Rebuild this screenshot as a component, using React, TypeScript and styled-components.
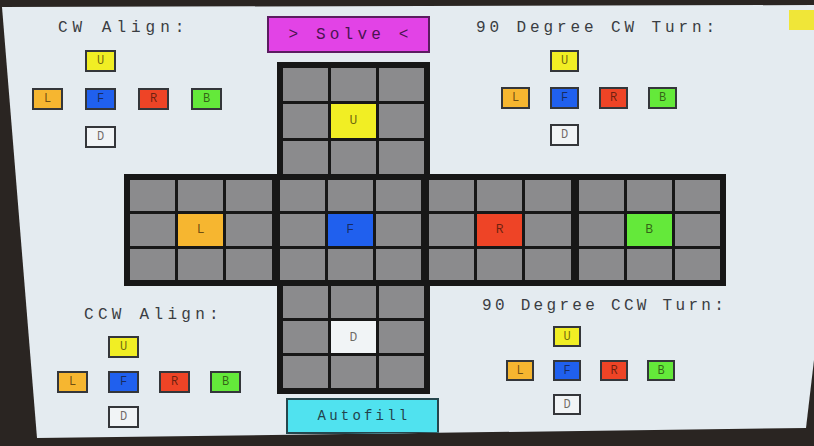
import React from 'react';
import styled, { createGlobalStyle } from 'styled-components';

type Face = 'U' | 'L' | 'F' | 'R' | 'B' | 'D';

// sticker colours for each face centre
const faceColors: Record<Face, string> = {
  U: '#f1ee24',
  L: '#f6b630',
  F: '#2060ee',
  R: '#ee4426',
  B: '#64e93a',
  D: '#f1f4f6',
};

const GlobalStyle = createGlobalStyle`
  html, body {
    margin: 0;
    padding: 0;
  }
  body {
    width: 814px;
    height: 446px;
    overflow: hidden;
    background: #2a2522;
    font-family: 'Liberation Mono', 'DejaVu Sans Mono', monospace;
  }
`;

const Screen = styled.div`
  width: 814px;
  height: 446px;
  background: #e4ebf0;
  clip-path: polygon(2px 7px, 814px 5px, 814px 360px, 806px 428px, 37px 438px);
  display: grid;
  grid-template-columns: 277px 153px 1fr;
  grid-template-rows: 174px 112px 1fr;
`;

/* ---------- side panels ---------- */

const Panel = styled.div<{ $top: number; $left: number }>`
  padding: ${(p) => p.$top}px 0 0 ${(p) => p.$left}px;
  display: flex;
  flex-direction: column;
  align-items: flex-start;
`;

const PanelHeader = styled.div`
  display: flex;
  align-items: flex-start;
  align-self: stretch;
`;

const Title = styled.div<{ $indent: number; $below: number; $spacing: number }>`
  margin-left: ${(p) => p.$indent}px;
  margin-bottom: ${(p) => p.$below}px;
  font-size: 16px;
  line-height: 16px;
  letter-spacing: ${(p) => p.$spacing}px;
  color: #3a3d42;
  white-space: nowrap;
`;

const StatusLight = styled.div`
  margin: -10px 0 0 auto;
  width: 25px;
  height: 20px;
  background: #f0e638;
`;

const KeyPad = styled.div<{ $w: number; $h: number; $colGap: number; $rowGap: number }>`
  display: grid;
  grid-template-columns: repeat(4, ${(p) => p.$w}px);
  grid-auto-rows: ${(p) => p.$h}px;
  column-gap: ${(p) => p.$colGap}px;
  row-gap: ${(p) => p.$rowGap}px;
`;

const Key = styled.button<{ $face: Face }>`
  grid-column: ${(p) => (p.$face === 'U' || p.$face === 'D' ? '2' : 'auto')};
  margin: 0;
  padding: 0;
  border: 2px solid #34363a;
  background: ${(p) => faceColors[p.$face]};
  color: rgba(20, 10, 0, 0.6);
  font-family: 'Liberation Mono', monospace;
  font-size: 12px;
  line-height: 1;
  display: flex;
  align-items: center;
  justify-content: center;
`;

const KeySpacer = styled.div``;

type PadSize = { w: number; h: number; colGap: number; rowGap: number };

const MovePad: React.FC<PadSize> = ({ w, h, colGap, rowGap }) => (
  <KeyPad $w={w} $h={h} $colGap={colGap} $rowGap={rowGap}>
    <Key $face="U">U</Key>
    <KeySpacer />
    <KeySpacer />
    <Key $face="L">L</Key>
    <Key $face="F">F</Key>
    <Key $face="R">R</Key>
    <Key $face="B">B</Key>
    <Key $face="D">D</Key>
  </KeyPad>
);

/* ---------- cube net ---------- */

const CenterColumn = styled.div`
  display: flex;
  flex-direction: column;
`;

const SolveButton = styled.button`
  margin: 16px 0 9px -10px;
  width: 163px;
  height: 37px;
  padding: 0 0 0 4px;
  border: 2px solid #5b1c60;
  background: #e243e6;
  color: #4a1450;
  font-family: 'Liberation Mono', monospace;
  font-size: 16px;
  letter-spacing: 4.2px;
`;

const AutofillButton = styled.button`
  margin: 4px 0 0 9px;
  width: 153px;
  height: 36px;
  padding: 0 0 0 3px;
  border: 2px solid #25464d;
  background: #50e2ef;
  color: #23424c;
  font-family: 'Liberation Mono', monospace;
  font-size: 14px;
  letter-spacing: 3.2px;
`;

const FaceGrid = styled.div`
  display: grid;
  grid-template-columns: repeat(3, 1fr);
  grid-template-rows: repeat(3, 1fr);
  gap: 3px;
  background: #171717;
  box-sizing: border-box;
`;

const TopFace = styled(FaceGrid)`
  height: 112px;
  border: 6px solid #171717;
  border-bottom: 0;
`;

const BottomFace = styled(FaceGrid)`
  height: 108px;
  border: 6px solid #171717;
  border-top: 0;
`;

const BandFace = styled(FaceGrid)`
  flex: 1;
`;

const Band = styled.div`
  grid-column: 1 / -1;
  margin-left: 124px;
  width: 602px;
  box-sizing: border-box;
  padding: 6px;
  background: #171717;
  display: flex;
  gap: 8px;
`;

const Cell = styled.div<{ $color?: string }>`
  background: ${(p) => p.$color ?? '#8b8b8d'};
  display: flex;
  align-items: center;
  justify-content: center;
  font-size: 13px;
  color: rgba(20, 10, 0, 0.6);
`;

const FaceCells: React.FC<{ face: Face }> = ({ face }) => (
  <>
    {Array.from({ length: 9 }, (_, i) =>
      i === 4 ? (
        <Cell key={i} $color={faceColors[face]}>
          {face}
        </Cell>
      ) : (
        <Cell key={i} />
      )
    )}
  </>
);

const App: React.FC = () => {
  const bandFaces: Face[] = ['L', 'F', 'R', 'B'];

  return (
    <>
      <GlobalStyle />
      <Screen>
        {/* top row */}
        <Panel $top={20} $left={32}>
          <Title $indent={26} $below={14} $spacing={5}>CW Align:</Title>
          <MovePad w={31} h={22} colGap={22} rowGap={16} />
        </Panel>

        <CenterColumn>
          <SolveButton>&gt; Solve &lt;</SolveButton>
          <TopFace>
            <FaceCells face="U" />
          </TopFace>
        </CenterColumn>

        <Panel $top={20} $left={71}>
          <PanelHeader>
            <Title $indent={-25} $below={14} $spacing={3.9}>90 Degree CW Turn:</Title>
            <StatusLight />
          </PanelHeader>
          <MovePad w={29} h={22} colGap={20} rowGap={15} />
        </Panel>

        {/* middle band: L F R B */}
        <Band>
          {bandFaces.map((f) => (
            <BandFace key={f}>
              <FaceCells face={f} />
            </BandFace>
          ))}
        </Band>

        {/* bottom row */}
        <Panel $top={21} $left={57}>
          <Title $indent={27} $below={13} $spacing={4.3}>CCW Align:</Title>
          <MovePad w={31} h={22} colGap={20} rowGap={13} />
        </Panel>

        <CenterColumn>
          <BottomFace>
            <FaceCells face="D" />
          </BottomFace>
          <AutofillButton>Autofill</AutofillButton>
        </CenterColumn>

        <Panel $top={12} $left={76}>
          <Title $indent={-24} $below={12} $spacing={3.3}>90 Degree CCW Turn:</Title>
          <MovePad w={28} h={21} colGap={19} rowGap={13} />
        </Panel>
      </Screen>
    </>
  );
};

export default App;
